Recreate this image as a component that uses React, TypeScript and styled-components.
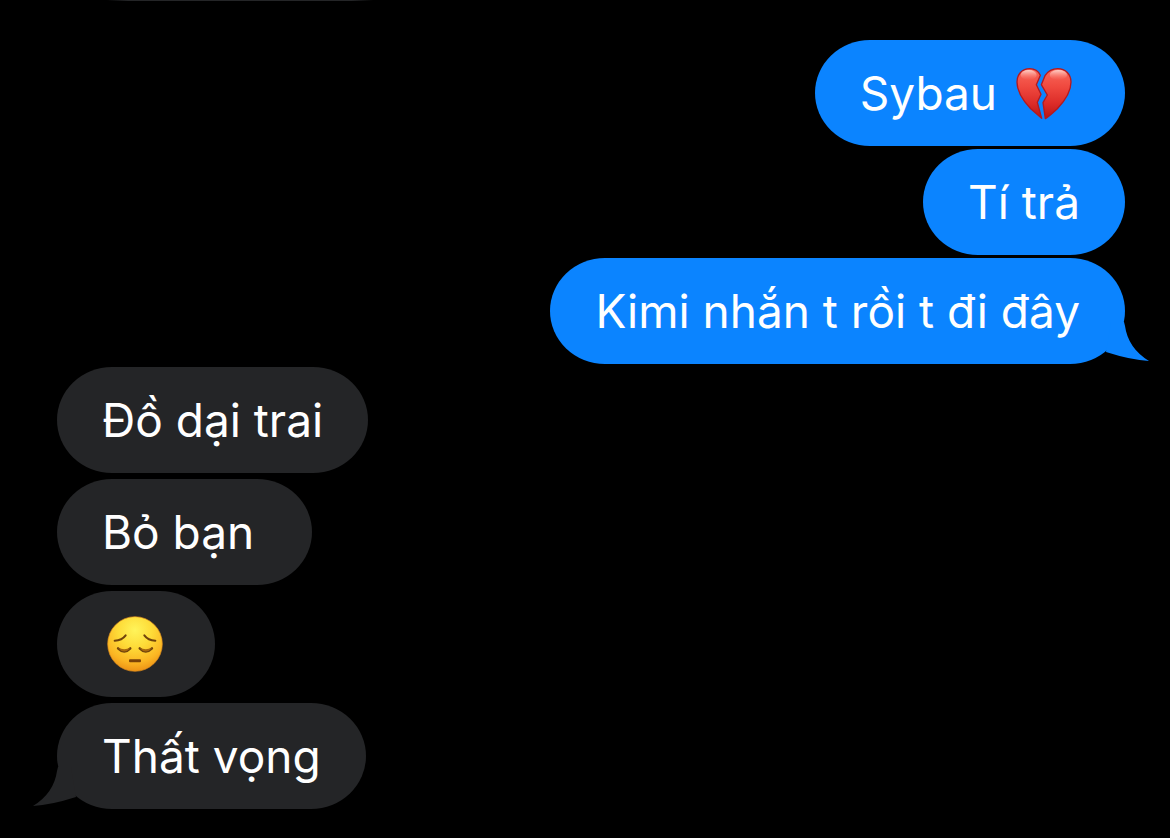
import React from "react";
import styled, { createGlobalStyle } from "styled-components";

const BLUE = "#0b84ff";
const GRAY = "#242527";

const GlobalStyle = createGlobalStyle`
  body {
    margin: 0;
    background: #000;
    color: #fff;
    font-family: Inter, "Liberation Sans", sans-serif;
    overflow-x: hidden;
  }
`;

const Conversation = styled.main`
  display: flex;
  flex-direction: column;
  gap: 3px;
  padding: 0 45px 29px 57px;
`;

const PreviousBubbleEdge = styled.div`
  width: 266px;
  height: 1px;
  margin: 0 0 36px 50px;
  background: linear-gradient(90deg, #000, ${GRAY} 8%, ${GRAY} 92%, #000);
`;

const MessageGroup = styled.section<{ $sent?: boolean }>`
  display: flex;
  flex-direction: column;
  align-items: ${(p) => (p.$sent ? "flex-end" : "flex-start")};
  gap: ${(p) => (p.$sent ? "3px" : "6px")};
`;

const Bubble = styled.p<{ $sent?: boolean }>`
  position: relative;
  box-sizing: border-box;
  display: flex;
  align-items: center;
  min-height: 106px;
  margin: 0;
  padding: 21px 45px;
  border-radius: 55px / 53px;
  background: ${(p) => (p.$sent ? BLUE : GRAY)};
  font-size: 46px;
  line-height: 64px;
  white-space: pre-wrap;
`;

const Tail = styled.svg<{ $sent?: boolean }>`
  position: absolute;
  bottom: 0;
  ${(p) => (p.$sent ? "right: -24px;" : "left: -24px; transform: scaleX(-1);")}
  fill: ${(p) => (p.$sent ? BLUE : GRAY)};
`;

const Emoji = styled.svg`
  display: block;
  flex: none;
  margin: 0 7px 0 5px;
`;

function BrokenHeart() {
  return (
    <Emoji width="58" height="54" viewBox="45 32 174 162" role="img" aria-label="💔">
      <defs>
        <linearGradient id="heart" x1="0" y1="0" x2="0" y2="1">
          <stop offset="0" stopColor="#f9695c" />
          <stop offset="0.35" stopColor="#f04a40" />
          <stop offset="0.7" stopColor="#dc2c28" />
          <stop offset="1" stopColor="#b81414" />
        </linearGradient>
        <linearGradient id="shine" x1="0" y1="0" x2="0" y2="1">
          <stop offset="0" stopColor="#ffe3dc" stopOpacity="0.85" />
          <stop offset="1" stopColor="#ff8d80" stopOpacity="0" />
        </linearGradient>
      </defs>
      <g fill="url(#heart)" stroke="#b3191f" strokeWidth="4" strokeLinejoin="round">
        <path d="M121 60C114 45 102 40 89 40C66 40 51 57 51 80C51 112 70 137 92 160L125 189L112 141L123 117L109 88Z" />
        <path d="M135 61C145 46 158 40 173 40C197 40 213 57 213 80C213 112 194 137 172 160C158 173 148 182 136 190L129 142L142 119L124 88Z" />
      </g>
      <ellipse cx="86" cy="59" rx="24" ry="15" fill="url(#shine)" />
      <ellipse cx="175" cy="59" rx="26" ry="15" fill="url(#shine)" />
    </Emoji>
  );
}

function PensiveFace() {
  return (
    <Emoji width="56" height="56" viewBox="51 47 168 168" role="img" aria-label="😔">
      <defs>
        <radialGradient id="face" cx="0.5" cy="0.25" r="0.78">
          <stop offset="0" stopColor="#fff45a" />
          <stop offset="0.4" stopColor="#fedb38" />
          <stop offset="0.75" stopColor="#fbb623" />
          <stop offset="1" stopColor="#ea8c13" />
        </radialGradient>
      </defs>
      <circle cx="135" cy="131" r="82" fill="url(#face)" stroke="#dd8b1c" strokeWidth="2" />
      <g fill="none" stroke="#70430c" strokeLinecap="round">
        <path d="M74 121Q96 120 107 105M163 105Q174 120 196 121" strokeWidth="6" />
        <path d="M84 144Q103 163 121 144M149 144Q167 163 186 144" strokeWidth="7" />
      </g>
      <path d="M84 144Q103 149 121 144Q103 163 84 144ZM149 144Q167 149 186 144Q167 163 149 144Z" fill="#a8690f" />
      <rect x="117" y="177" width="36" height="9" rx="3" fill="#7a4208" />
    </Emoji>
  );
}

function BubbleTail({ sent }: { sent?: boolean }) {
  return (
    <Tail $sent={sent} width="54" height="50" viewBox="0 0 54 50" aria-hidden="true">
      <path d="M16 8L29 8L30 12Q33 34 54 47Q36 46 11 38Z" />
    </Tail>
  );
}

export default function App() {
  return (
    <>
      <GlobalStyle />
      <Conversation>
        <PreviousBubbleEdge />
        <MessageGroup $sent>
          <Bubble $sent>
            {"Sybau "}
            <BrokenHeart />
          </Bubble>
          <Bubble $sent>Tí trả</Bubble>
          <Bubble $sent>
            Kimi nhắn t rồi t đi đây
            <BubbleTail sent />
          </Bubble>
        </MessageGroup>
        <MessageGroup>
          <Bubble>Đồ dại trai</Bubble>
          <Bubble>{"Bỏ bạn "}</Bubble>
          <Bubble>
            <PensiveFace />
          </Bubble>
          <Bubble>
            Thất vọng
            <BubbleTail />
          </Bubble>
        </MessageGroup>
      </Conversation>
    </>
  );
}
